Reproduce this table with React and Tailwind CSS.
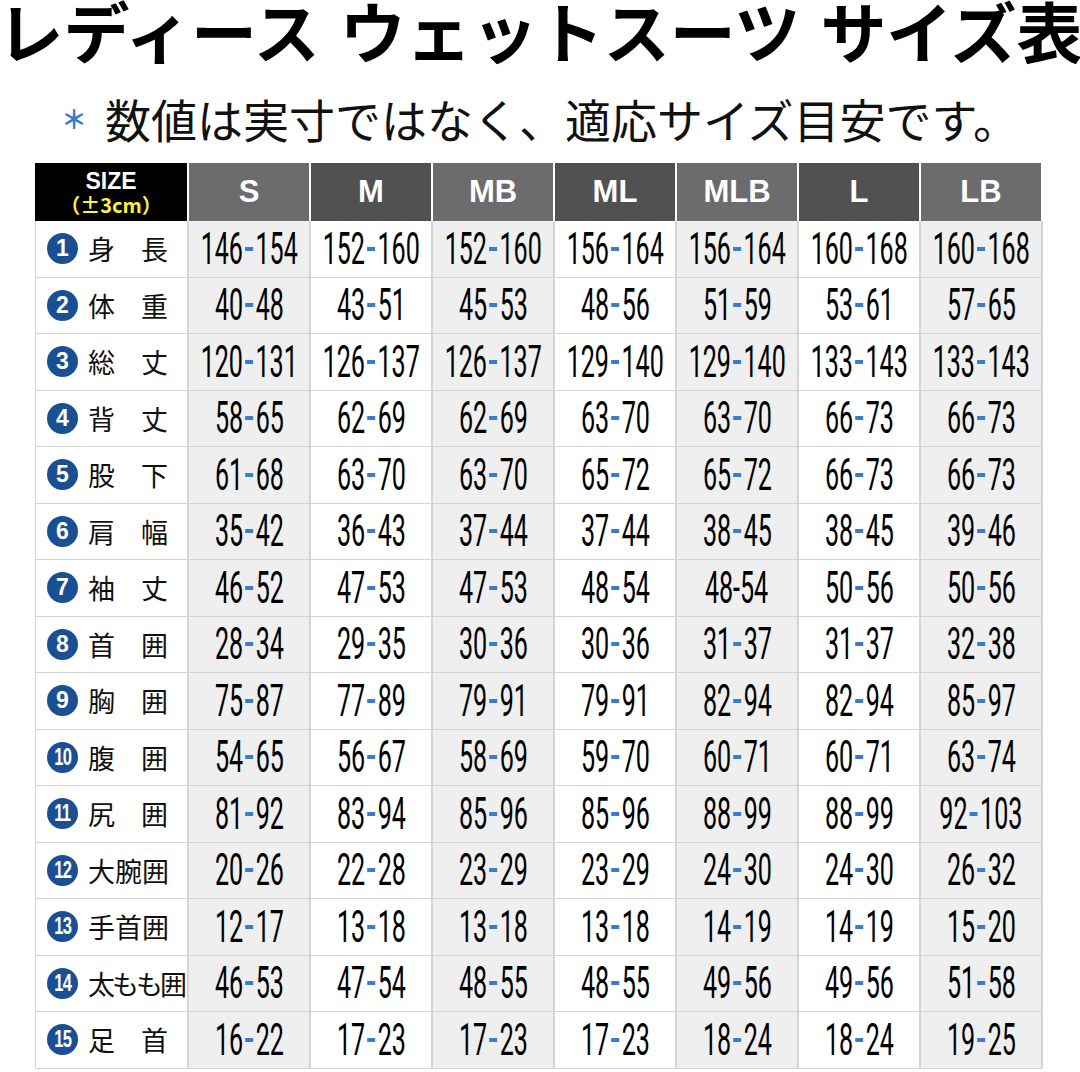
import React from 'react';

const sizes = ['S', 'M', 'MB', 'ML', 'MLB', 'L', 'LB'];

const rows = [
  { label: ['身', '長'], v: ['146-154', '152-160', '152-160', '156-164', '156-164', '160-168', '160-168'] },
  { label: ['体', '重'], v: ['40-48', '43-51', '45-53', '48-56', '51-59', '53-61', '57-65'] },
  { label: ['総', '丈'], v: ['120-131', '126-137', '126-137', '129-140', '129-140', '133-143', '133-143'] },
  { label: ['背', '丈'], v: ['58-65', '62-69', '62-69', '63-70', '63-70', '66-73', '66-73'] },
  { label: ['股', '下'], v: ['61-68', '63-70', '63-70', '65-72', '65-72', '66-73', '66-73'] },
  { label: ['肩', '幅'], v: ['35-42', '36-43', '37-44', '37-44', '38-45', '38-45', '39-46'] },
  { label: ['袖', '丈'], v: ['46-52', '47-53', '47-53', '48-54', '48_54', '50-56', '50-56'] },
  { label: ['首', '囲'], v: ['28-34', '29-35', '30-36', '30-36', '31-37', '31-37', '32-38'] },
  { label: ['胸', '囲'], v: ['75-87', '77-89', '79-91', '79-91', '82-94', '82-94', '85-97'] },
  { label: ['腹', '囲'], v: ['54-65', '56-67', '58-69', '59-70', '60-71', '60-71', '63-74'] },
  { label: ['尻', '囲'], v: ['81-92', '83-94', '85-96', '85-96', '88-99', '88-99', '92-103'] },
  { label: ['大', '腕', '囲'], v: ['20-26', '22-28', '23-29', '23-29', '24-30', '24-30', '26-32'] },
  { label: ['手', '首', '囲'], v: ['12-17', '13-18', '13-18', '13-18', '14-19', '14-19', '15-20'] },
  { label: ['太', 'も', 'も', '囲'], v: ['46-53', '47-54', '48-55', '48-55', '49-56', '49-56', '51-58'] },
  { label: ['足', '首'], v: ['16-22', '17-23', '17-23', '17-23', '18-24', '18-24', '19-25'] },
];

const jp = "font-['Noto_Sans_CJK_JP',sans-serif]";

// "_" marks a range printed with a plain black hyphen
const Value = ({ text }) => {
  const plain = text.includes('_');
  const [a, b] = text.split(plain ? '_' : '-');
  return (
    <span className="inline-block scale-x-[0.57] font-['Roboto',sans-serif] text-[44px] font-normal leading-none whitespace-nowrap text-black">
      {a}
      {plain ? (
        <span>-</span>
      ) : (
        <span className="mx-[4px] inline-block h-[4px] w-[14px] align-[0.3em] bg-[#3a7bd0]" />
      )}
      {b}
    </span>
  );
};

const Badge = ({ n }) => (
  <div className="flex h-[31px] w-[31px] shrink-0 items-center justify-center rounded-full bg-[#1b4f94]">
    <span
      className={`font-['Liberation_Sans',sans-serif] font-bold leading-none text-white ${
        n > 9 ? 'scale-x-[0.72] text-[23px] tracking-[-1px]' : 'text-[23px]'
      }`}
    >
      {n}
    </span>
  </div>
);

export default function App() {
  return (
    <div className="w-[1080px] h-[1072px] overflow-hidden bg-white">
      <h1 className={`${jp} -mt-[4px] flex justify-center gap-[20px] text-[66px] font-bold leading-none whitespace-nowrap text-black`}>
        <span>レディース</span>
        <span>ウェットスーツ</span>
        <span>サイズ表</span>
      </h1>

      <p className={`${jp} mt-[33px] flex items-center justify-center h-[46px] text-[46px] leading-none whitespace-nowrap text-[#111]`}>
        <span className="mr-[18px] text-[26px] font-bold text-[#3a7bd0]">＊</span>
        数値は実寸ではなく、適応サイズ目安です。
      </p>

      <div className="mt-[22px] ml-[35px] grid w-[1008px] grid-cols-[154px_repeat(7,122px)]">
        <div className="flex h-[58px] flex-col items-center justify-center gap-[2px] border-r-2 border-white bg-black font-['Liberation_Sans',sans-serif] font-bold leading-none">
          <span className="text-[23px] leading-none text-white">SIZE</span>
          <span className={`${jp} text-[20px] font-bold leading-none text-[#fff23a]`}>（±3cm）</span>
        </div>
        {sizes.map((s, i) => (
          <div
            key={s}
            className={`flex h-[58px] items-center justify-center border-r-2 border-white font-['Liberation_Sans',sans-serif] text-[31px] font-bold text-white ${
              i % 2 === 0 ? 'bg-[#6c6c6e]' : 'bg-[#515153]'
            }`}
          >
            {s}
          </div>
        ))}

        {rows.map((r, ri) => (
          <React.Fragment key={ri}>
            <div className="flex h-[56.5px] items-center gap-[10px] border-b border-l border-r-2 border-[#d4d4d4] pl-[11px]">
              <Badge n={ri + 1} />
              <div
                className={`${jp} flex justify-between text-[27px] leading-none text-[#111] ${
                  r.label.length > 3 ? 'w-[90px] tracking-[-3px]' : 'w-[80px]'
                }`}
              >
                {r.label.map((c, ci) => (
                  <span key={ci}>{c}</span>
                ))}
              </div>
            </div>
            {r.v.map((v, ci) => (
              <div
                key={ci}
                className={`flex h-[56.5px] items-center justify-center border-r-2 border-b border-[#d4d4d4] ${
                  ci % 2 === 0 ? 'bg-[#efefef]' : 'bg-white'
                }`}
              >
                <Value text={v} />
              </div>
            ))}
          </React.Fragment>
        ))}
      </div>
    </div>
  );
}
